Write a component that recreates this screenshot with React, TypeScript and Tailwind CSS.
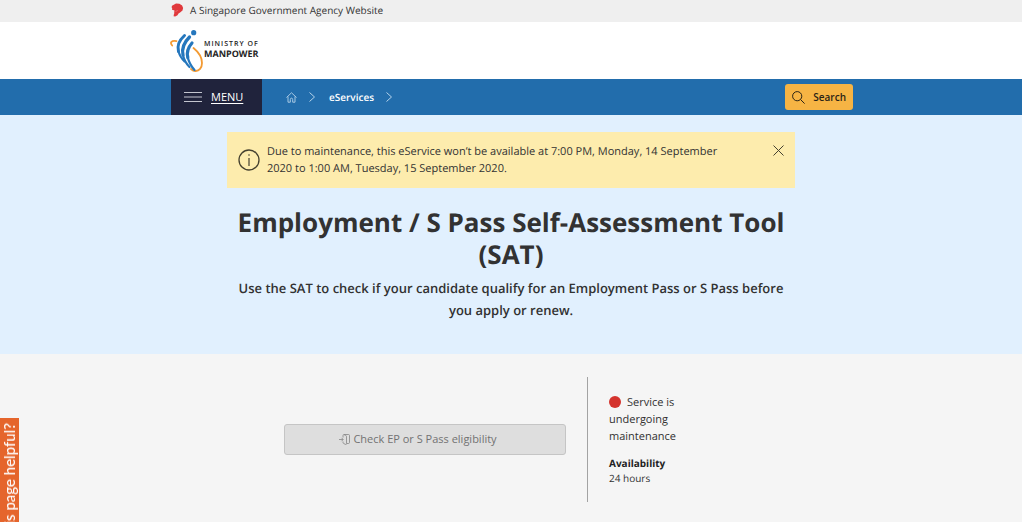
import React from "react";

function Lion() {
  return (
    <svg viewBox="0 0 13 14" className="h-[14px] w-[13px]" aria-hidden="true">
      <path
        fill="#e0393c"
        d="M1 2.800 3.200 1.400 5 .5 8.400.8l2.700 1.600 1 2.600-.6 2.600-2.400 2-1.600.9-1 1.800-2.300 1.200-1.600-.3.300-2 .6-1.400-.7-.8 1-1-.9-.8-1.900-.4.2-1.500-.6-1z"
      />
      <path d="M4.500 8.600 6.800 7.400" fill="none" stroke="#f3b0b0" strokeWidth=".4" />
    </svg>
  );
}

function LogoMark() {
  return (
    <svg viewBox="0 0 34 44" className="h-[44px] w-[34px]" aria-hidden="true">
      <g fill="none" stroke="#f39a32" strokeLinecap="round">
        <path d="M2.200 16.500C-.5 13.500 1.500 11.200 6.500 12.200" strokeWidth="1.700" />
        <path d="M23.500 19C29 23.500 32 29 32 34c0 5-3 8.200-6.500 8-2 0-3.500-1-4.500-2" strokeWidth="1.800" />
      </g>
      <g fill="none" stroke="#2577bd" strokeLinecap="round">
        <circle cx="23.700" cy="3.700" r="2.600" fill="#2577bd" stroke="none" />
        <path d="M14.500 6.500C9 11.500 7 17 8.500 22.500" strokeWidth="3" />
        <path d="M8.500 22.500c1 4 3.500 7.500 6 10" strokeWidth="2" />
        <path d="M19.500 8C14 13.500 11.500 19.500 13 26" strokeWidth="3.300" />
        <path d="M13 26c1 5 3.500 9 6.500 12" strokeWidth="2.200" />
        <path d="M22 14C18 18.500 16.500 23.500 17.800 28.500" strokeWidth="3.200" />
        <path d="M17.800 28.500c1 4.500 3.200 8.500 6.700 12.500" strokeWidth="2.200" />
      </g>
    </svg>
  );
}

function Chevron() {
  return (
    <svg viewBox="0 0 6 10" className="h-[10px] w-[6px]" fill="none" stroke="#b5d3ea" aria-hidden="true">
      <path d="m.5.5 5 4.500-5 4.500" />
    </svg>
  );
}

function Home() {
  return (
    <svg viewBox="0 0 11 11" className="h-[11px] w-[11px]" fill="none" stroke="#b5d3ea" strokeWidth=".9" aria-hidden="true">
      <path d="M.5 5.500 5.500.8l5 4.700M2 4.500v5.700h2.300V7.500c0-1.800 2.400-1.800 2.400 0v2.700H9V4.500" />
    </svg>
  );
}

export default function App() {
  return (
    <div className="min-h-screen bg-[#f5f5f5] font-['Open_Sans','Noto_Sans',sans-serif] text-[#323232] [text-rendering:geometricPrecision]">
      <div className="bg-[#efefef]">
        <div className="mx-auto flex h-[22px] max-w-[680px] items-center gap-1.5 pb-[3px]">
          <Lion />
          <span className="text-[10px] leading-4">A Singapore Government Agency Website</span>
        </div>
      </div>

      <header className="bg-white">
        <div className="mx-auto flex h-[57px] max-w-[682px] items-center">
          <a href="#" className="flex items-center text-[#252525]">
            <LogoMark />
            <span className="pb-1 leading-none">
              <span className="block text-[7px] leading-[9px] font-semibold tracking-[1px]">MINISTRY OF</span>
              <span className="block text-[9px] leading-[9px] font-bold">MANPOWER</span>
            </span>
          </a>
        </div>
      </header>

      <nav className="bg-[#226dac]">
        <div className="mx-auto flex h-9 max-w-[684px] items-center pl-0.5 text-white">
          <button type="button" className="flex h-full w-[91px] items-center gap-[9px] bg-[#20233c] pl-[13px]">
            <svg viewBox="0 0 18 10" className="h-[10px] w-[18px]" stroke="#c3c5cf" aria-hidden="true">
              <path d="M0 .5h18M0 5h18M0 9.500h18" />
            </svg>
            <span className="text-[11px] underline underline-offset-2">MENU</span>
          </button>
          <div className="flex items-center pl-6 text-[10px]">
            <a href="#" aria-label="Home"><Home /></a>
            <span className="pl-3"><Chevron /></span>
            <a href="#" className="pr-3 pl-3.5 font-semibold">eServices</a>
            <Chevron />
          </div>
          <button type="button" className="ml-auto flex h-[26px] items-center gap-2 rounded-[3px] bg-[#f6b444] px-[7px] text-[10px] font-semibold text-[#2b2416]">
            <svg viewBox="0 0 13 13" className="h-[13px] w-[13px]" fill="none" stroke="currentColor" aria-hidden="true">
              <circle cx="5.200" cy="5.200" r="4.600" />
              <path d="m8.500 8.500 4.100 4.100" />
            </svg>
            Search
          </button>
        </div>
      </nav>

      <section className="bg-[#e1f0fe] pt-[17px] pb-[33px]">
        <div className="mx-auto max-w-[568px]">
          <div role="status" className="flex items-start bg-[#fdecad] p-[11px]">
            <svg viewBox="0 0 22 22" className="mt-1.5 h-[22px] w-[22px] shrink-0" fill="none" stroke="#45412f" aria-hidden="true">
              <circle cx="11" cy="11" r="10" strokeWidth="1.300" />
              <path d="M11 9v8" strokeWidth="1.200" />
              <circle cx="11" cy="6" r=".8" fill="#45412f" stroke="none" />
            </svg>
            <p className="flex-1 pr-8 pl-[7px] text-[11px] leading-[17px]">
              Due to maintenance, this eService won’t be available at 7:00 PM, Monday, 14 September 2020 to 1:00 AM, Tuesday, 15 September 2020.
            </p>
            <button type="button" aria-label="Close" className="pt-0.5">
              <svg viewBox="0 0 11 11" className="h-[11px] w-[11px]" fill="none" stroke="#45412f" aria-hidden="true">
                <path d="m.5.5 10 10m0-10-10 10" />
              </svg>
            </button>
          </div>
          <h1 className="pt-[18px] text-center text-[26px] leading-8 font-bold">
            Employment / S Pass Self-Assessment Tool (SAT)
          </h1>
          <p className="pt-[7px] text-center text-[13px] leading-[22px] font-semibold">
            Use the SAT to check if your candidate qualify for an Employment Pass or S Pass before you apply or renew.
          </p>
        </div>
      </section>

      <main className="mx-auto flex max-w-[454px] pt-[23px]">
        <div className="flex flex-1 items-center pr-[21px]">
          <button
            type="button"
            disabled
            className="flex h-[31px] w-full items-center justify-center gap-[3px] rounded-[3px] border border-[#c5c5c5] bg-[#dedede] pr-3.5 text-[11px] text-[#727272]"
          >
            <svg viewBox="0 0 11 11" className="h-[11px] w-[11px]" fill="none" stroke="#858585" strokeWidth=".8" aria-hidden="true">
              <path d="M0 5.500h4M2.500 3.800l1.700 1.700-1.700 1.700M4 3.500V1.500C4 .8 4.500.5 5 .5h4.500c.6 0 1 .4 1 1v7c0 .6-.4 1-1 1H8M4 7.500v1c0 .5.200.8.700 1l1.800.9c.6.300 1-.1 1-.7V2.500c0-.5-.2-.8-.7-1L5 .6" />
            </svg>
            Check EP or S Pass eligibility
          </button>
        </div>
        <aside className="w-[151px] border-l border-[#a3a3a3] pt-[17px] pb-4 pl-[21px]">
          <p className="max-w-[90px] text-[11px] leading-[17px]">
            <span className="mr-1.5 inline-block size-3 rounded-full bg-[#d4332d] align-[-2px]" />
            Service is undergoing maintenance
          </p>
          <p className="pt-[11px] text-[10px] leading-[15px] font-bold text-[#222222]">Availability</p>
          <p className="text-[10px] leading-[15px]">24 hours</p>
        </aside>
      </main>

      <button
        type="button"
        className="fixed top-[80%] left-0 flex w-[19px] rotate-180 items-center justify-center bg-[#e5652c] pt-3 pb-[5px] font-['Lato',sans-serif] text-[15px] leading-[19px] font-medium whitespace-nowrap text-white [writing-mode:vertical-rl]"
      >
        Is this page helpful?
      </button>
    </div>
  );
}
